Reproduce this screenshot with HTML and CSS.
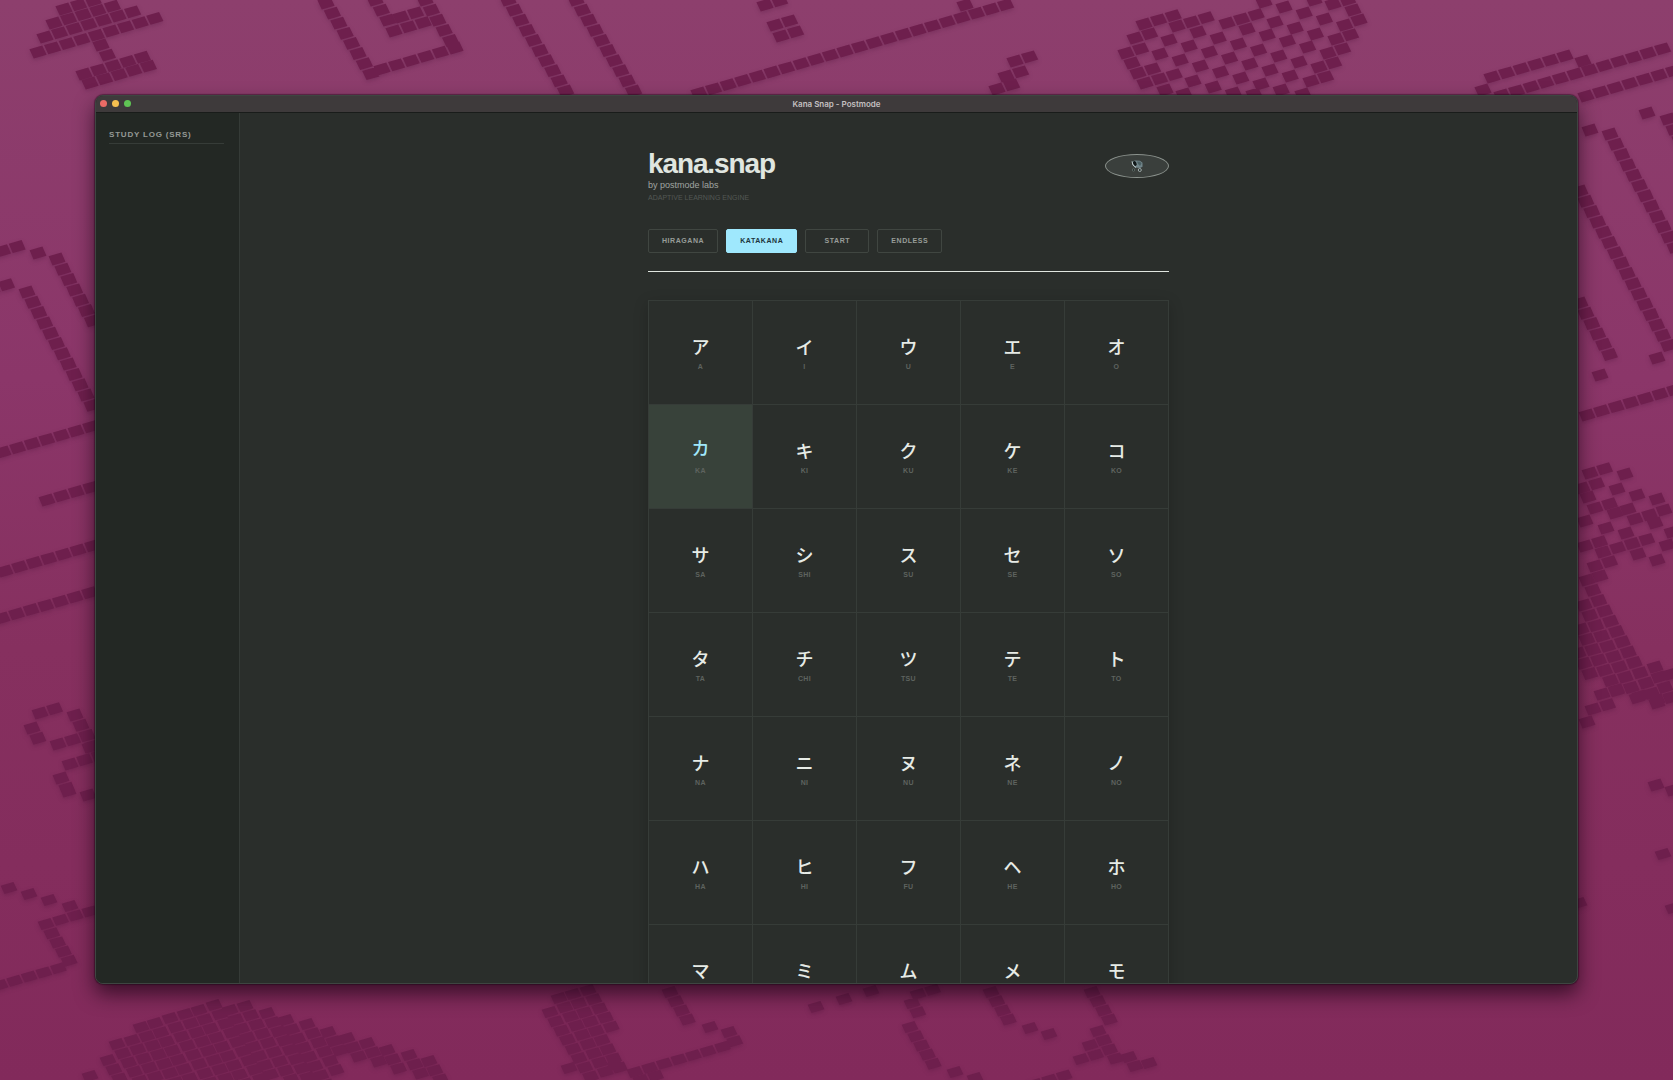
FILE: index.html
```html
<!DOCTYPE html>
<html lang="en">
<head>
<meta charset="utf-8">
<title>Kana Snap - Postmode</title>
<link rel="stylesheet" href="styles.css">
</head>
<body>
<svg class="wallpaper" viewBox="0 0 1673 1080" preserveAspectRatio="xMidYMid slice" aria-hidden="true"><path class="tiles" id="tiles"/></svg>
<div class="window">
  <header class="titlebar">
    <div class="lights"><i class="light red"></i><i class="light amber"></i><i class="light green"></i></div>
    <span class="window-title">Kana Snap - Postmode</span>
  </header>
  <div class="body">
    <aside class="sidebar"><h2>STUDY LOG (SRS)</h2></aside>
    <main class="main">
      <div class="content">
        <div class="brand">
          <div>
            <h1>kana.snap</h1>
            <p class="by">by postmode labs</p>
            <p class="engine">ADAPTIVE LEARNING ENGINE</p>
          </div>
          <button class="sound" aria-label="Sound">
            <svg width="12" height="12" viewBox="0 0 12 12">
              <path d="M1 1.500 4 .5 9 .8l2.500 2v4L9 8 4 7.500 1.500 5z" fill="#71858a"/>
              <path d="M6 1.500 9 1.500 10.500 3.500 9 6 7 4z" fill="#4b6064"/>
              <ellipse cx="3.800" cy="3.500" rx="1.700" ry="2.500" transform="rotate(-25 3.800 3.500)" fill="#101718"/>
              <path d="M1 1.500 2 5l3 2.500" fill="none" stroke="#c3cfd0"/>
              <circle cx="2.500" cy="10" r="1.200" fill="#1b2221" stroke="#5c6864"/>
              <circle cx="8.800" cy="10" r="1.500" fill="#27302f" stroke="#a0acaa"/>
            </svg>
          </button>
        </div>
        <nav class="modes">
          <button>HIRAGANA</button>
          <button class="on">KATAKANA</button>
          <button>START</button>
          <button>ENDLESS</button>
        </nav>
        <div class="grid">
          <button class="cell"><b lang="ja">ア</b><small>A</small></button>
          <button class="cell"><b lang="ja">イ</b><small>I</small></button>
          <button class="cell"><b lang="ja">ウ</b><small>U</small></button>
          <button class="cell"><b lang="ja">エ</b><small>E</small></button>
          <button class="cell"><b lang="ja">オ</b><small>O</small></button>
          <button class="cell active"><b lang="ja">カ</b><small>KA</small></button>
          <button class="cell"><b lang="ja">キ</b><small>KI</small></button>
          <button class="cell"><b lang="ja">ク</b><small>KU</small></button>
          <button class="cell"><b lang="ja">ケ</b><small>KE</small></button>
          <button class="cell"><b lang="ja">コ</b><small>KO</small></button>
          <button class="cell"><b lang="ja">サ</b><small>SA</small></button>
          <button class="cell"><b lang="ja">シ</b><small>SHI</small></button>
          <button class="cell"><b lang="ja">ス</b><small>SU</small></button>
          <button class="cell"><b lang="ja">セ</b><small>SE</small></button>
          <button class="cell"><b lang="ja">ソ</b><small>SO</small></button>
          <button class="cell"><b lang="ja">タ</b><small>TA</small></button>
          <button class="cell"><b lang="ja">チ</b><small>CHI</small></button>
          <button class="cell"><b lang="ja">ツ</b><small>TSU</small></button>
          <button class="cell"><b lang="ja">テ</b><small>TE</small></button>
          <button class="cell"><b lang="ja">ト</b><small>TO</small></button>
          <button class="cell"><b lang="ja">ナ</b><small>NA</small></button>
          <button class="cell"><b lang="ja">ニ</b><small>NI</small></button>
          <button class="cell"><b lang="ja">ヌ</b><small>NU</small></button>
          <button class="cell"><b lang="ja">ネ</b><small>NE</small></button>
          <button class="cell"><b lang="ja">ノ</b><small>NO</small></button>
          <button class="cell"><b lang="ja">ハ</b><small>HA</small></button>
          <button class="cell"><b lang="ja">ヒ</b><small>HI</small></button>
          <button class="cell"><b lang="ja">フ</b><small>FU</small></button>
          <button class="cell"><b lang="ja">ヘ</b><small>HE</small></button>
          <button class="cell"><b lang="ja">ホ</b><small>HO</small></button>
          <button class="cell"><b lang="ja">マ</b></button>
          <button class="cell"><b lang="ja">ミ</b></button>
          <button class="cell"><b lang="ja">ム</b></button>
          <button class="cell"><b lang="ja">メ</b></button>
          <button class="cell"><b lang="ja">モ</b></button>
        </div>
      </div>
    </main>
  </div>
</div>
<script src="wallpaper.js"></script>
</body>
</html>
```
FILE: styles.css
```css
* { box-sizing: border-box; }
body {
  margin: 0;
  height: 100vh;
  padding: 95px 95px 96px;
  overflow: hidden;
  background: linear-gradient(#8d3f6d, #8b3669 35%, #86305f 60%, #822a5b);
  font-family: "Liberation Sans", Arial, sans-serif;
  color: #e0e6e0;
}
h1, h2, p { margin: 0; }
button { font: inherit; color: inherit; margin: 0; padding: 0; border: 0; background: none; }

.wallpaper { position: absolute; inset: 0; width: 100%; height: 100%; }
.tiles { fill: #6e1f4d; filter: drop-shadow(0 2px 2px rgba(80, 20, 60, .3)); }

.window {
  position: relative;
  height: 100%;
  display: flex;
  flex-direction: column;
  overflow: hidden;
  border: 1px solid #3e4541;
  border-radius: 8px;
  background: #2a2e2b;
  box-shadow: 0 0 1px 1px rgba(20, 5, 15, .4), 0 10px 20px rgba(20, 0, 15, .65);
}
.titlebar {
  flex: none;
  height: 17px;
  display: grid;
  grid-template-columns: 1fr auto 1fr;
  align-items: center;
  padding: 0 4px 1px;
  background: #3e3a3b;
  border-bottom: 1px solid #191c1a;
}
.lights { display: flex; gap: 5px; }
.light { width: 7px; height: 7px; border-radius: 50%; }
.red { background: #ec6b66; }
.amber { background: #f5bf50; }
.green { background: #5fc454; }
.window-title { font: 600 8px/14px Inter, sans-serif; color: #c4c0c1; }

.body { flex: 1; min-height: 0; display: flex; }
.sidebar {
  flex: none;
  width: 144px;
  padding: 17px 15px 0 13px;
  background: #232824;
  border-right: 1px solid #353b37;
}
.sidebar h2 {
  font-size: 8px;
  line-height: 10px;
  letter-spacing: .1em;
  padding-bottom: 3px;
  color: #959a96;
  border-bottom: 1px solid #363c38;
}
.main { flex: 1; min-width: 0; overflow: hidden; padding: 37px 20px 0; }
.content { max-width: 521px; margin: 0 auto; }

.brand { display: flex; justify-content: space-between; align-items: flex-start; }
h1 { font-size: 28px; line-height: 28px; letter-spacing: -.04em; }
.by { font-size: 9px; line-height: 14px; color: #a0a5a1; }
.engine { font-size: 7px; line-height: 11px; color: #535854; }
.sound {
  width: 64px;
  height: 24px;
  margin-top: 4px;
  display: grid;
  place-items: center;
  border: 1px solid #8b928d;
  border-radius: 50%;
  background: #3a3f3c;
}

.modes {
  display: flex;
  gap: 8px;
  margin: 26px 0 28px;
  padding-bottom: 18px;
  border-bottom: 1px solid #e0e6e0;
}
.modes button {
  min-width: 64px;
  height: 24px;
  padding: 0 13px 1px;
  border: 1px solid #404641;
  border-radius: 2px;
  font-size: 7px;
  font-weight: 700;
  letter-spacing: .08em;
  color: #989d99;
}
.modes .on { background: #9fe8fd; border-color: #9fe8fd; color: #1c343b; }

.grid {
  display: grid;
  grid-template-columns: repeat(5, 1fr);
  gap: 1px;
  padding: 1px;
  background: #363c38;
  box-shadow: 0 4px 14px rgba(0, 0, 0, .2);
}
.cell {
  aspect-ratio: 1;
  display: flex;
  flex-direction: column;
  align-items: center;
  justify-content: flex-start;
  padding-top: 34px;
  background: #2a2e2b;
}
.cell b { font: 500 18px/22px "Noto Sans CJK JP", sans-serif; color: #e6ebe6; }
.cell small { font-size: 7px; line-height: 10px; margin-top: 5px; font-weight: 700; letter-spacing: .05em; color: #5e635f; }
.active { background: #38423a; }
.active b { color: #a0e8fa; transform: translateY(-3px); }
```
FILE: wallpaper.js
```js
// Mosaic wallpaper. Each entry: kind, centre x, centre y, tile count.
// r = along a row, c = down a column, d = diagonally, s = single tile
const runs = `
r 38 52 9;r 45 37 7;r 54 23 5;r 64 9 3;c 101 45 2;r 84 74 5;r 90 83 5;
c 326 3 8;r 382 69 6;c 425 0 5;c 375 0 3;r 394 31 3;r 401 17 2;
c 508 0 10;c 576 0 10;r 765 5 2;r 775 25 2;r 781 36 2;r 699 93 22;s 965 5;
r 1015 61 2;r 1006 76 2;r 997 89 2;
r 1144 24 3;r 1177 26 3;r 1227 23 3;s 1264 2;s 1314 0;r 1333 4 2;s 1353 10;s 1359 20;
r 1336 39 2;r 1328 53 2;r 1319 67 2;r 1311 81 2;s 1303 94;
r 1135 38 2;r 1126 53 2;s 1132 63;r 1138 73 2;r 1145 83 3;s 1165 90;s 1184 94;
d 1169 40 7;d 1198 32 6;d 1160 54 7;d 1247 29 4;d 1275 22 3;d 1284 7 4;d 1193 81 3;s 1254 94;
r 1492 77 6;s 1583 61;r 1502 95 12;s 1483 90;r 1586 96 7;
r -12 255 3;s 38 253;c 57 259 7;r -8 289 2;c 27 292 12;
r 3 452 7;r 47 500 4;r 5 571 7;r 2 618 7;
r 40 713 2;c 32 728 2;c 75 715 4;r 58 744 3;s 90 747;r 70 764 3;c 61 778 2;s 68 791;s 88 795;
s 1647 113;c 1668 119 4;s 1590 130;c 1610 134 12;c 1580 191 16;c 1580 303 6;s 1600 375;s 1657 358;r 1587 415 7;
r 1590 473 2;s 1625 474;r 1582 488 2;s 1617 489;s 1637 495;s 1588 497;r 1595 508 2;s 1615 513;s 1628 509;s 1657 499;s 1664 510;
r 1635 519 2;s 1655 523;s 1585 521;s 1606 528;s 1626 533;s 1672 532;r 1585 546 2;r 1603 552 4;s 1638 554;s 1667 545;s 1657 560;r 1595 566 2;s 1600 576;
c 1587 580 12;c 1584 605 10;c 1581 629 7;c 1578 653 3;
s 1655 667;c 1659 677 3;s 1640 696;s 1657 700;s 1671 674;s 1671 697;r 1602 694 2;r 1593 709 2;s 1587 722;
s 1657 703;s 1656 785;s 1673 790;s 1663 854;s 1673 908;s 1579 903;
s 9 888;s 29 894;s 49 900;s 70 906;r 46 924 4;c 46 924 5;r 0 985 5;
c 141 1027 8;c 155 1023 8;c 170 1018 9;c 185 1014 9;c 199 1010 9;c 214 1005 9;c 230 1010 8;c 245 1006 9;
c 267 1013 8;c 286 1020 8;c 307 1024 6;c 328 1032 3;c 347 1038 3;c 367 1043 3;c 387 1050 3;c 409 1055 3;c 429 1061 3;
c 132 1040 6;c 117 1044 6;c 108 1060 3;s 90 1076;
c 550 1012 8;c 559 998 9;c 573 994 9;c 588 990 5;s 569 1068;s 615 1065;
c 670 992 4;s 710 1027;c 729 1032 2;r 635 1072 7;r 641 1080 2;
s 816 1007;s 844 999;s 871 991;c 912 1003 2;r 918 994 2;c 910 1027 5;s 955 1072;s 975 1078;
c 991 992 4;s 1030 1028;s 1049 1034;c 1092 992 4;c 1098 1031 4;s 1090 1045;r 1081 1059 2;s 1129 1057;s 1135 1066;s 1149 1063;r 1035 1084 3`;

const row = [14.6, -4.2];
let d = "";
for (const run of runs.split(";")) {
  const [kind, x0, y0, count = 1] = run.trim().split(" ");
  const x = +x0, y = +y0;
  const col = y < 105 ? [6.4, 10.1] : y < 850 ? [5.9, 10.3] : [5.8, 9.2];
  const step = kind === "r" ? row : kind === "c" ? col : [20.2, 6];
  for (let i = 0; i < +count; i++) {
    // tile sides are squarer than the lattice they stand on
    const w = [row[0] * .88, row[1] * .88], h = [col[0] * .68, col[1] * .9];
    const sx = x + step[0] * i - (w[0] + h[0]) / 2;
    const sy = y + step[1] * i - (w[1] + h[1]) / 2;
    d += `M${sx} ${sy}l${w[0]} ${w[1]}l${h[0]} ${h[1]}l${-w[0]} ${-w[1]}z`;
  }
}
document.getElementById("tiles").setAttribute("d", d);
```
